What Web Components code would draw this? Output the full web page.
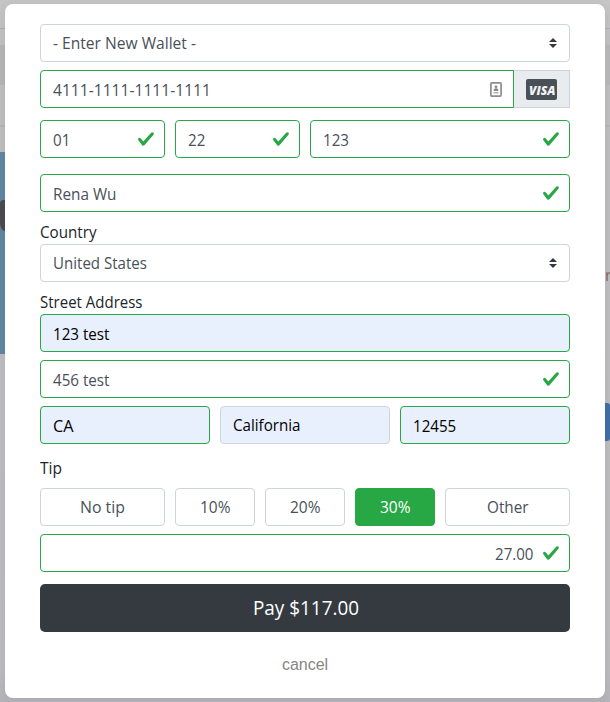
<!DOCTYPE html>
<html lang="en">
<head>
<meta charset="utf-8">
<title>Payment</title>
<style>
html,body{margin:0;height:100%;overflow:hidden}
body{font-family:"Open Sans","Noto Sans",sans-serif;font-size:15.7px;color:#212529;background:#bdbdbf}
</style>
</head>
<body>
<pay-page></pay-page>
<script>
const define=(name,html,init)=>customElements.define(name,class extends HTMLElement{
  connectedCallback(){
    if(this.shadowRoot)return;
    const t=document.createElement('template');
    t.innerHTML=html;
    this.attachShadow({mode:'open'}).append(t.content.cloneNode(true));
    if(init)init(this,this.shadowRoot);
  }
});

/* Text run condensed to an exact advance width. */
define('fit-text','<style>:host{display:inline-block;white-space:pre;line-height:24px;text-align:left;vertical-align:top}span{display:inline-block;transform-origin:0 50%}</style><span><slot></slot></span>',(el,root)=>{
  const w=parseFloat(el.getAttribute('w'));
  if(!w)return;
  const s=root.querySelector('span');
  const k=w/s.getBoundingClientRect().width;
  el.style.width=w+'px';
  s.style.transform='scaleX('+k+')';
});

define('check-icon','<style>:host{display:block;width:18px;height:18px}svg{display:block}</style><svg width="18" height="18" viewBox="0 0 8 8"><path fill="#28a745" d="M2.3 6.73L.6 4.53c-.4-1.04.46-1.4 1.1-.8l1.1 1.4 3.4-3.8c.6-.63 1.6-.27 1.2.7l-4 4.6c-.43.5-.8.4-1.1.1z"/></svg>');

define('sort-icon','<style>:host{display:block;width:8px;height:10px;margin-right:3px}svg{display:block}</style><svg width="8" height="10" viewBox="0 0 4 5"><path fill="#343a40" d="M2 0L0 2h4zm0 5L0 3h4z"/></svg>');

define('contact-icon','<style>:host{display:block;width:12px;height:15px;margin-right:2px}svg{display:block}</style><svg width="12" height="15" viewBox="0 0 12 15"><rect x=".9" y=".9" width="10.2" height="13.2" rx="1" fill="#fff" stroke="#8d8d8d" stroke-width="1.7"/><circle cx="6" cy="4.8" r="1.4" fill="#888"/><path d="M3.8 9V7.6Q4.2 6.2 6 6.2T8.2 7.6V9z" fill="#888"/><path d="M3.4 10.8h5.2" stroke="#999" stroke-width="1.1"/></svg>');

define('visa-card','<style>:host{display:flex;align-items:center;justify-content:flex-end;box-sizing:border-box;padding:1px 1.5px 0 0;width:31px;height:21px;border-radius:2px;background:#495057;color:#f1f3f5;font:italic 800 12.8px/21px "Open Sans",sans-serif}</style><fit-text w="26.5">VISA</fit-text>');

define('form-field',`<style>
:host{display:flex;align-items:center;justify-content:space-between;box-sizing:border-box;height:38px;padding:0 9px 0 12px;border:1px solid #ced4da;border-radius:4px;background:#fff;color:#495057}
:host([valid]){border-color:#28a745}
:host([filled]){background:#e8f0fe;color:#000}
:host([end]){justify-content:flex-end;gap:9px}
:host([joined]){border-radius:4px 0 0 4px}
.t{display:flex;padding-top:2px}
:host([flat]) .t{padding-top:0}
</style><span class="t"><slot></slot></span><slot name="icon"></slot>`);

define('tip-button',`<style>
:host{display:block}
button{display:flex;align-items:center;justify-content:center;box-sizing:border-box;width:100%;height:38px;padding:0;border:1px solid #ced4da;border-radius:4px;background:#fff;color:#495057;font:inherit}
:host([active]) button{background:#28a745;border-color:#28a745;color:#fff}
</style><button><slot></slot></button>`);

define('pay-button','<style>:host{display:block}button{display:flex;align-items:center;justify-content:center;width:100%;height:48px;padding:0 0 0 1px;border:0;border-radius:5px;background:#343a40;color:#fff;font-family:inherit;font-size:19.6px}</style><button><slot></slot></button>');

define('field-row','<style>:host{display:grid;gap:10px}</style><slot></slot>',el=>{el.style.gridTemplateColumns=el.getAttribute('cols')});

/* Dimmed page that stays visible at either side of the dialog. */
define('page-edge',`<style>
:host{display:flex;flex-direction:column;width:5px;overflow:hidden}
div{flex:none}
.a{height:28px}.l{height:1px;background:#aeaeb1}.b{height:16px}
.c{height:40px;background:#b5b5b7}.d{height:40px}.e{height:2px;background:#b3b3b6}.f{height:25px}
.gap{height:136px}
.photo{height:202px;background:#5f87a3;padding-top:48px;box-sizing:border-box}
.shape{height:31px;background:#4b4b4e;border-radius:4px 0 0 5px/3px 0 0 8px}
.r{height:24px;font-size:15.7px;line-height:24px;color:#7d665b}
.btn{margin-top:116px;height:38px;background:#406da3;border-radius:0 3px 3px 0}
</style><div class="a"></div><div class="l"></div><div class="b"></div><div class="c"></div><div class="d"></div><div class="e"></div>
<div class="rest"></div>`,(el,root)=>{
  root.querySelector('.rest').innerHTML=el.getAttribute('side')==='left'
    ?'<div class="f"></div><div class="photo"><div class="shape"></div></div>'
    :'<div class="gap"></div><div class="r">r</div><div class="btn"></div>';
});

define('pay-dialog',`<style>
:host{display:flex;flex-direction:column;box-sizing:border-box;width:600px;height:694px;margin-top:4px;padding:20px 35px 0;border-radius:8px;background:#fff;box-shadow:0 1px 8px rgba(60,60,75,.1)}
</style><slot></slot>`);

define('pay-page',`<style>
:host{display:flex;height:702px;width:610px;background:linear-gradient(#c6c6c6,#bfbfc1 50px,#bcbcbf 670px,#b4b3b9)}
.g8{margin-top:8px}.g12{margin-top:12px}.g16{margin-top:16px}
.label{height:24px;line-height:24px;margin-top:8px}
.label.tip{margin-top:12px}
.card{display:flex}.card form-field{width:474px}
.addon{display:flex;align-items:center;justify-content:center;box-sizing:border-box;width:56px;height:38px;background:#e9ecef;border:1px solid #ced4da;border-left:0}
.cancel{margin-top:21px;text-align:center;font:16px/24px "Liberation Sans",Arial,sans-serif;color:#868686}
</style>
<page-edge side="left"></page-edge>
<pay-dialog>
<form-field flat><fit-text w="143">- Enter New Wallet -</fit-text><sort-icon slot="icon"></sort-icon></form-field>
<div class="card g8"><form-field valid joined><fit-text w="158">4111-1111-1111-1111</fit-text><contact-icon slot="icon"></contact-icon></form-field><div class="addon"><visa-card></visa-card></div></div>
<field-row class="g12" cols="125px 125px 260px">
<form-field valid><fit-text w="17.3">01</fit-text><check-icon slot="icon"></check-icon></form-field>
<form-field valid><fit-text w="17.3">22</fit-text><check-icon slot="icon"></check-icon></form-field>
<form-field valid><fit-text w="26">123</fit-text><check-icon slot="icon"></check-icon></form-field>
</field-row>
<form-field class="g16" valid><fit-text w="63.5">Rena Wu</fit-text><check-icon slot="icon"></check-icon></form-field>
<div class="label"><fit-text w="56.5">Country</fit-text></div>
<form-field flat><fit-text w="94">United States</fit-text><sort-icon slot="icon"></sort-icon></form-field>
<div class="label"><fit-text w="102.5">Street Address</fit-text></div>
<form-field valid filled><fit-text w="56.5">123 test</fit-text></form-field>
<form-field class="g8" valid><fit-text w="56.5">456 test</fit-text><check-icon slot="icon"></check-icon></form-field>
<field-row class="g8" cols="1fr 1fr 1fr">
<form-field valid filled><fit-text w="20.5">CA</fit-text></form-field>
<form-field filled flat><fit-text w="67.5">California</fit-text></form-field>
<form-field valid filled><fit-text w="43.2">12455</fit-text></form-field>
</field-row>
<div class="label tip"><fit-text w="22">Tip</fit-text></div>
<field-row class="g8" cols="125px 80px 80px 80px 125px">
<tip-button><fit-text w="45">No tip</fit-text></tip-button>
<tip-button><fit-text w="30.5">10%</fit-text></tip-button>
<tip-button><fit-text w="30.5">20%</fit-text></tip-button>
<tip-button active><fit-text w="30.5">30%</fit-text></tip-button>
<tip-button><fit-text w="41.5">Other</fit-text></tip-button>
</field-row>
<form-field class="g8" valid end><fit-text w="38.5">27.00</fit-text><check-icon slot="icon"></check-icon></form-field>
<pay-button class="g12"><fit-text w="106">Pay $117.00</fit-text></pay-button>
<div class="cancel">cancel</div>
</pay-dialog>
<page-edge side="right"></page-edge>`);
</script>
</body>
</html>
